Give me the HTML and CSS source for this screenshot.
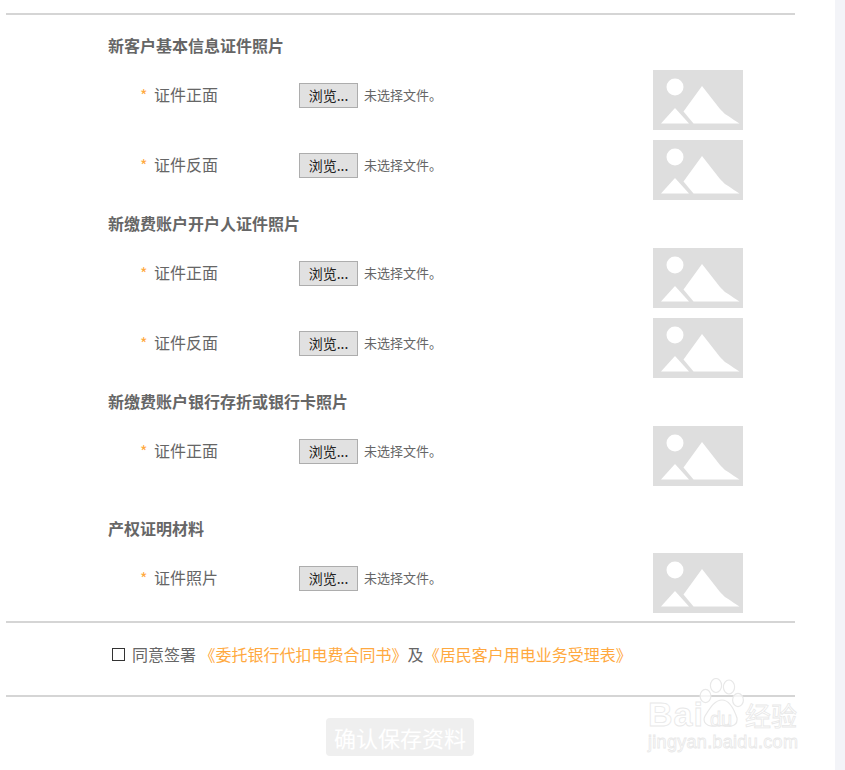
FILE: index.html
```html
<!DOCTYPE html>
<html lang="zh-CN">
<head>
<meta charset="utf-8">
<title>资料上传</title>
<link rel="stylesheet" href="styles.css">
</head>
<body>
<svg class="sprite" width="0" height="0" aria-hidden="true">
  <symbol id="ph" viewBox="0 0 90 60">
    <rect width="90" height="60" fill="#dedede"/>
    <circle cx="22" cy="17" r="8.5" fill="#fff"/>
    <path d="M22 38 L8 53.5 H36 Z" fill="#fff"/>
    <path d="M49 16 L30.5 41.5 L40.5 53.5 H86.5 L81 50 L76 46.5 L72 44 L67 39 Z" fill="#fff"/>
  </symbol>
</svg>
<main class="page">
  <hr class="rule">
  <section class="group group-first">
    <h2 class="group-title">新客户基本信息证件照片</h2>
    <div class="rows">
      <div class="row">
        <span class="star">*</span><span class="label">证件正面</span>
        <div class="file"><button class="browse" type="button">浏览...</button><span class="file-note">未选择文件。</span></div>
        <svg class="thumb"><use href="#ph"/></svg>
      </div>
      <div class="row">
        <span class="star">*</span><span class="label">证件反面</span>
        <div class="file"><button class="browse" type="button">浏览...</button><span class="file-note">未选择文件。</span></div>
        <svg class="thumb"><use href="#ph"/></svg>
      </div>
    </div>
  </section>
  <section class="group">
    <h2 class="group-title">新缴费账户开户人证件照片</h2>
    <div class="rows">
      <div class="row">
        <span class="star">*</span><span class="label">证件正面</span>
        <div class="file"><button class="browse" type="button">浏览...</button><span class="file-note">未选择文件。</span></div>
        <svg class="thumb"><use href="#ph"/></svg>
      </div>
      <div class="row">
        <span class="star">*</span><span class="label">证件反面</span>
        <div class="file"><button class="browse" type="button">浏览...</button><span class="file-note">未选择文件。</span></div>
        <svg class="thumb"><use href="#ph"/></svg>
      </div>
    </div>
  </section>
  <section class="group">
    <h2 class="group-title">新缴费账户银行存折或银行卡照片</h2>
    <div class="rows">
      <div class="row">
        <span class="star">*</span><span class="label">证件正面</span>
        <div class="file"><button class="browse" type="button">浏览...</button><span class="file-note">未选择文件。</span></div>
        <svg class="thumb"><use href="#ph"/></svg>
      </div>
    </div>
  </section>
  <section class="group group-wide">
    <h2 class="group-title">产权证明材料</h2>
    <div class="rows">
      <div class="row">
        <span class="star">*</span><span class="label">证件照片</span>
        <div class="file"><button class="browse" type="button">浏览...</button><span class="file-note">未选择文件。</span></div>
        <svg class="thumb"><use href="#ph"/></svg>
      </div>
    </div>
  </section>
  <hr class="rule rule-after-form">
  <div class="agree">
    <span class="checkbox"></span>
    <span class="agree-text">同意签署 <a class="doc" href="#">《委托银行代扣电费合同书》</a>及<a class="doc" href="#">《居民客户用电业务受理表》</a></span>
  </div>
  <hr class="rule">
  <div class="actions"><button class="submit" type="button">确认保存资料</button></div>
</main>
<aside class="strip"></aside>
<div class="watermark">
  <svg class="paw" viewBox="0 0 46 56" aria-hidden="true">
    <g fill="#fff" fill-opacity=".75" stroke="#e8e8e8" stroke-width="1.2">
      <ellipse cx="17" cy="7.5" rx="5.6" ry="7"/>
      <ellipse cx="30" cy="9" rx="5.6" ry="7"/>
      <ellipse cx="6.5" cy="18" rx="5.4" ry="6.6"/>
      <ellipse cx="39" cy="22" rx="5.4" ry="6.6"/>
      <path d="M23 22 C31 22 36 34 38 40 C39 47 33 49 27 48 C23 47.500 19 47.500 15 48 C8 49 3 44 6 38 C10 32 15 22 23 22 Z"/>
    </g>
  </svg>
  <span class="wm-bai">Bai</span>
  <span class="wm-du">du</span>
  <span class="wm-jy">经验</span>
  <span class="wm-url">jingyan.baidu.com</span>
</div>
</body>
</html>
```
FILE: styles.css
```css
* { box-sizing: border-box; }
html, body { margin: 0; padding: 0; height: 770px; overflow: hidden; background: #fff; }
body {
  position: relative;
  display: flex;
  font-family: "Noto Sans CJK SC", "Liberation Sans", sans-serif;
  color: #666;
}
.sprite { position: absolute; }
.page { width: 789px; margin-left: 6px; padding-top: 13px; flex: none; }
.strip { width: 10px; height: 770px; margin-left: 40px; background: #f3f4f8; flex: none; }
.rule { height: 2px; margin: 0; border: 0; background: #d5d5d5; }
.rule-after-form { margin-top: 8px; }
.group { padding: 12px 0 0 102px; }
.group-first { padding-top: 19px; }
.group-wide { padding-top: 31px; }
.group-title { margin: 0 0 14px; font-size: 16px; line-height: 22px; font-weight: 700; color: #666; }
.rows { display: flex; flex-direction: column; gap: 10px; }
.row { display: flex; align-items: flex-start; height: 60px; padding-left: 32px; }
.star { width: 14px; margin-top: 15px; font-size: 16px; line-height: 20px; color: #ffa940; }
.label { width: 145px; margin-top: 12px; font-size: 16px; line-height: 24px; color: #666; }
.file { display: flex; align-items: center; width: 354px; margin-top: 13px; }
.browse {
  width: 59px; height: 25px; padding: 0;
  font: 14px/23px "Noto Sans CJK SC", sans-serif;
  color: #222; background: #e1e1e1; border: 1px solid #adadad; border-radius: 0;
}
.file-note { margin: 0 0 2px 6px; font-size: 13px; line-height: 20px; color: #666; }
.thumb { width: 90px; height: 60px; display: block; flex: none; }
.agree { display: flex; align-items: center; height: 72px; padding: 19px 0 29px 106px; }
.checkbox { width: 13px; height: 13px; border: 1px solid #333; flex: none; }
.agree-text { margin-left: 7px; font-size: 16px; line-height: 24px; color: #666; white-space: nowrap; }
.doc { color: #ffa940; text-decoration: none; }
.actions { display: flex; justify-content: center; padding: 21px 1px 0 0; }
.submit {
  width: 148px; height: 38px; padding: 0; border: 0; border-radius: 4px;
  background: #efefef; color: #fff;
  font: 22px/38px "Noto Sans CJK SC", sans-serif;
}
.watermark { position: absolute; left: 640px; top: 675px; width: 170px; height: 85px; pointer-events: none; }
.watermark span { position: absolute; color: rgba(255,255,255,.6); -webkit-text-stroke: .8px #e8e8e8; font-family: "Liberation Sans", sans-serif; white-space: nowrap; }
.paw { position: absolute; left: 59px; top: 3px; width: 46px; height: 56px; }
.wm-bai { left: 8px; top: 19px; font-size: 34px; line-height: 40px; font-weight: 700; letter-spacing: 1px; }
.wm-du { left: 70px; top: 32px; font-size: 20px; line-height: 24px; }
.watermark .wm-jy { left: 105px; top: 23px; font-size: 26px; line-height: 34px; font-family: "Noto Sans CJK SC", sans-serif; }
.wm-url { left: 8px; top: 56px; font-size: 18px; line-height: 22px; letter-spacing: .3px; }
```
